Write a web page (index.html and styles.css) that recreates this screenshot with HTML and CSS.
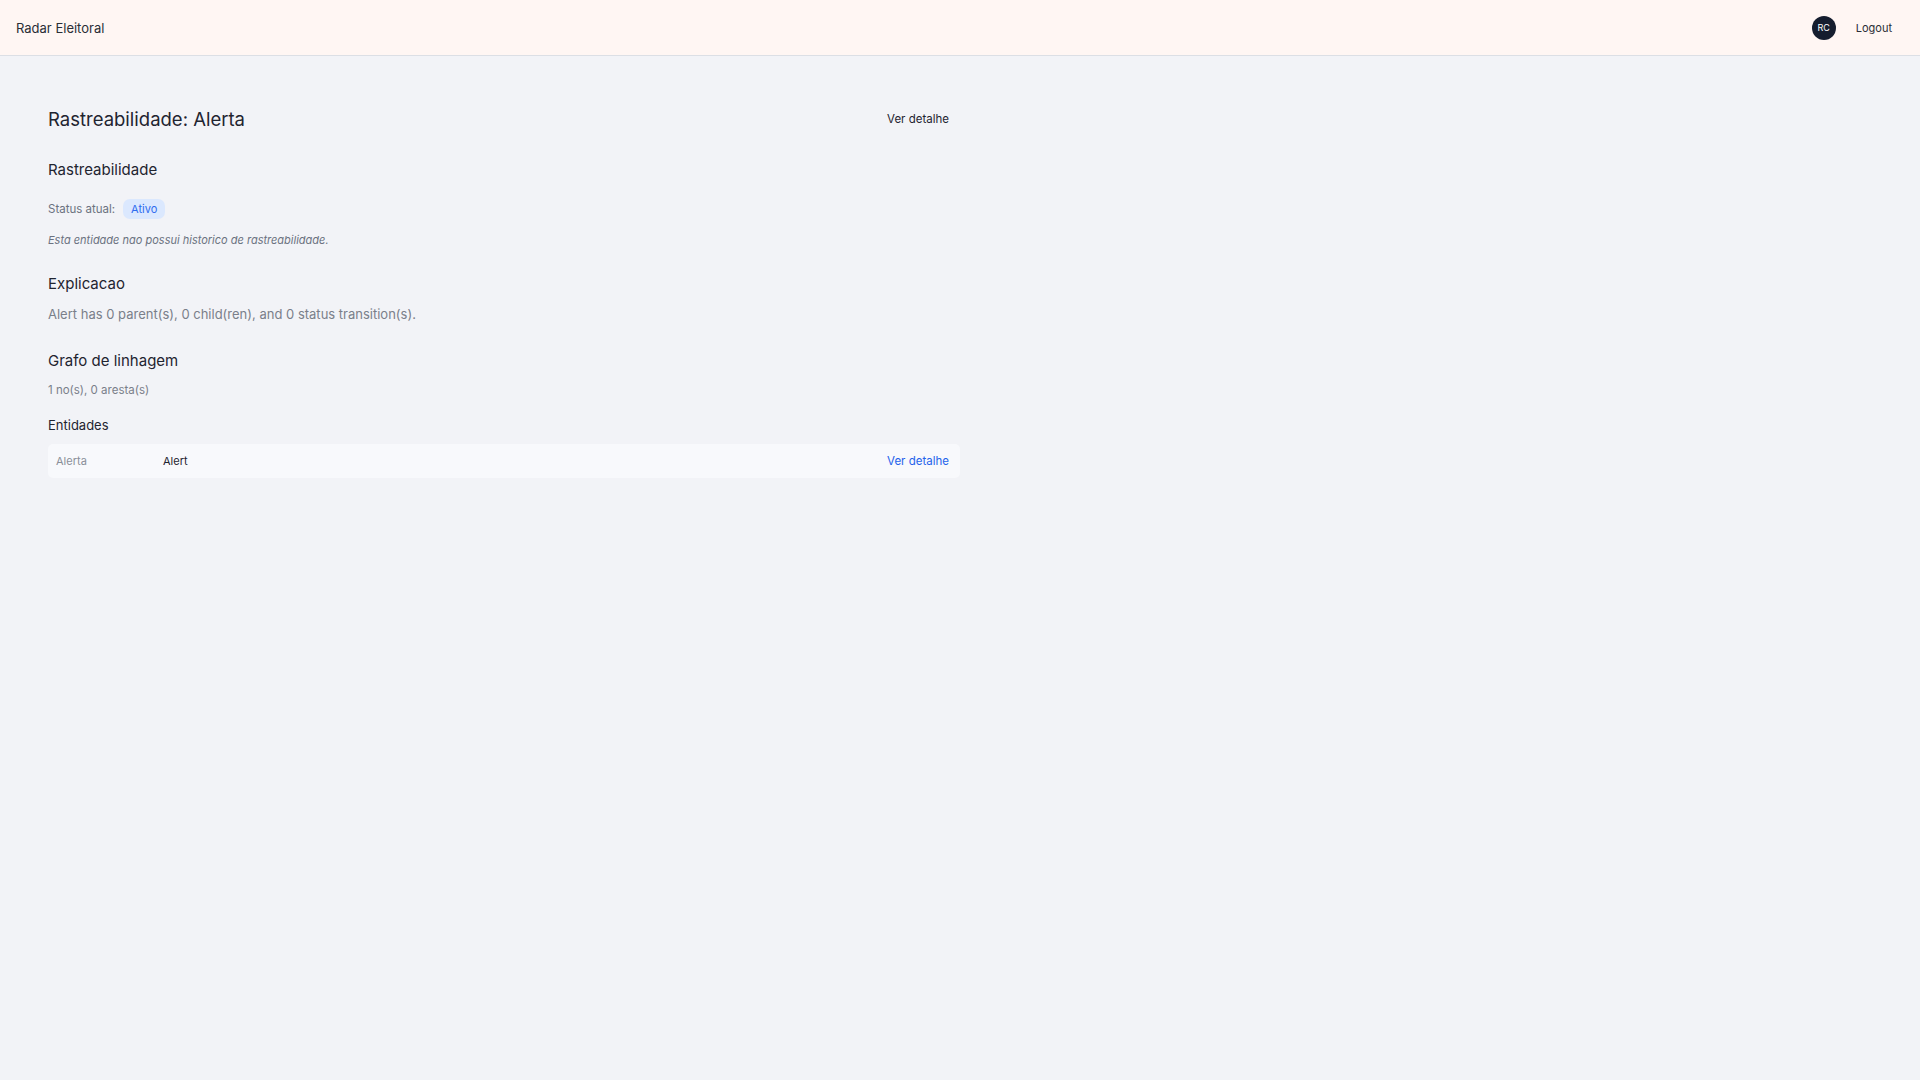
FILE: index.html
```html
<!DOCTYPE html>
<html lang="pt-BR">
<head>
  <meta charset="UTF-8">
  <title>Radar Eleitoral - Rastreabilidade</title>
  <link rel="stylesheet" href="styles.css">
</head>
<body>
  <header class="topbar">
    <a class="brand" href="#">Radar Eleitoral</a>
    <div class="user">
      <span class="avatar">RC</span>
      <a class="logout" href="#">Logout</a>
    </div>
  </header>

  <main class="page">
    <div class="page-head">
      <h1>Rastreabilidade: Alerta</h1>
      <a class="head-link" href="#">Ver detalhe</a>
    </div>

    <section class="block first">
      <h2>Rastreabilidade</h2>
      <p class="status">Status atual: <span class="badge">Ativo</span></p>
      <p class="empty">Esta entidade nao possui historico de rastreabilidade.</p>
    </section>

    <section class="block">
      <h2>Explicacao</h2>
      <p class="explain">Alert has 0 parent(s), 0 child(ren), and 0 status transition(s).</p>
    </section>

    <section class="block graph">
      <h2>Grafo de linhagem</h2>
      <p class="meta">1 no(s), 0 aresta(s)</p>
      <h3>Entidades</h3>
      <div class="entity-row">
        <span class="entity-type">Alerta</span>
        <span class="entity-name">Alert</span>
        <a class="entity-link" href="#">Ver detalhe</a>
      </div>
    </section>
  </main>
</body>
</html>
```

FILE: styles.css
```css
* {
  box-sizing: border-box;
}
body {
  margin: 0;
  font-family: Inter, 'Noto Sans', sans-serif;
  background-color: #f2f3f7;
  color: #1f2430;
}
a {
  text-decoration: none;
}
.topbar {
  height: 56px;
  background: #fff6f3;
  border-bottom: 1px solid #dcdfe5;
  display: flex;
  align-items: center;
  justify-content: space-between;
  padding: 0 16px;
}
.brand {
  font-size: 13px;
  color: #2a2e36;
}
.user {
  display: flex;
  align-items: center;
  gap: 20px;
  padding-right: 12px;
}
.avatar {
  width: 24px;
  height: 24px;
  border-radius: 50%;
  background: #151d2e;
  color: #fff;
  font-size: 9px;
  display: flex;
  align-items: center;
  justify-content: center;
}
.logout {
  font-size: 11px;
  color: #2a2e36;
}
.page {
  width: 912px;
  margin-left: 48px;
  padding-top: 49px;
}
.page-head {
  display: flex;
  align-items: center;
  justify-content: space-between;
  padding-right: 11px;
}
h1 {
  margin: 0;
  font-size: 18.5px;
  line-height: 28px;
  font-weight: 400;
  color: #1f2430;
}
.head-link {
  font-size: 11.5px;
  color: #1f2430;
}
.block {
  margin-top: 26px;
}
.block.first {
  margin-top: 27px;
}
.block.graph {
  margin-top: 28px;
}
h2 {
  margin: 0;
  font-size: 15px;
  line-height: 20px;
  font-weight: 400;
}
h3 {
  margin: 18px 0 0;
  font-size: 13px;
  line-height: 18px;
  font-weight: 400;
}
.status {
  margin: 19px 0 0;
  font-size: 11.5px;
  color: #6b7280;
  display: flex;
  align-items: center;
  gap: 8px;
}
.badge {
  background: #dbe8fe;
  color: #2f6cf0;
  border-radius: 7px;
  padding: 2px 8px;
  font-size: 11px;
  line-height: 16px;
}
.empty {
  margin: 13px 0 0;
  font-size: 11px;
  line-height: 16px;
  font-style: italic;
  color: #6b7280;
}
.explain {
  margin: 11px 0 0;
  font-size: 13px;
  line-height: 18px;
  color: #7a7f8a;
}
.meta {
  margin: 11px 0 0;
  font-size: 11.5px;
  line-height: 16px;
  color: #7a7f8a;
}
.entity-row {
  margin-top: 10px;
  background: #f8f9fc;
  border-radius: 5px;
  height: 34px;
  display: flex;
  align-items: center;
  padding: 0 11px 0 8px;
  font-size: 11px;
}
.entity-type {
  width: 107px;
  color: #8a8f99;
}
.entity-name {
  flex: 1;
  color: #1f2430;
}
.entity-link {
  font-size: 11.5px;
  color: #2563eb;
}
```
